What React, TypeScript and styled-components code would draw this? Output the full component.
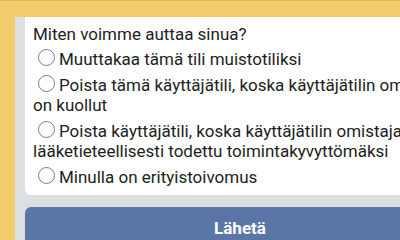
import styled, { createGlobalStyle } from "styled-components";

const GlobalStyle = createGlobalStyle`
  html, body {
    margin: 0;
    padding: 0;
    width: 100%;
    height: 100%;
    overflow: hidden;
    background: #ffffff;
  }
  body {
    font-family: Roboto, "Noto Sans", sans-serif;
  }
`;

const Frame = styled.div`
  width: 100%;
  height: 100%;
  overflow: hidden;
  background: #f2cc6c;
  border-top: 1px solid #e6b544;
  padding: 16px 0 0 15px;
  box-sizing: border-box;
`;

const Panel = styled.div`
  background: #dddfe2;
  padding: 0 0 0 10px;
  width: 600px;
  height: 100%;
`;

const Card = styled.div`
  width: 430px;
  box-sizing: border-box;
  background: #fff;
  border-radius: 0 0 6px 6px;
  padding: 7px 8px 8px;
  color: #1c1e21;
`;

const Heading = styled.div`
  font-size: 17px;
  line-height: 20px;
`;

const Option = styled.label`
  display: block;
  margin-top: 6px;
  font-size: 17px;
  line-height: 20px;
  &:first-of-type {
    margin-top: 5px;
  }
`;

const Radio = styled.span`
  display: inline-block;
  width: 17px;
  height: 17px;
  border: 1px solid #7a7d82;
  border-radius: 50%;
  box-sizing: border-box;
  margin: 0 4px 0 5px;
  vertical-align: -1px;
`;

const Submit = styled.button`
  display: block;
  width: 430px;
  margin-top: 12px;
  border: none;
  border-radius: 6px 6px 0 0;
  background: #5b75a8;
  color: #fff;
  font-family: Roboto, "Noto Sans", sans-serif;
  font-weight: 700;
  font-size: 17px;
  line-height: 20px;
  padding: 11px 0;
`;

const options = [
  "Muuttakaa tämä tili muistotiliksi",
  "Poista tämä käyttäjätili, koska käyttäjätilin omistaja on kuollut",
  "Poista käyttäjätili, koska käyttäjätilin omistaja on lääketieteellisesti todettu toimintakyvyttömäksi",
  "Minulla on erityistoivomus",
];

export default function App() {
  return (
    <>
      <GlobalStyle />
      <Frame>
        <Panel>
          <Card>
            <Heading>Miten voimme auttaa sinua?</Heading>
            {options.map((o) => (
              <Option key={o}>
                <Radio />
                {o}
              </Option>
            ))}
          </Card>
          <Submit>Lähetä</Submit>
        </Panel>
      </Frame>
    </>
  );
}
